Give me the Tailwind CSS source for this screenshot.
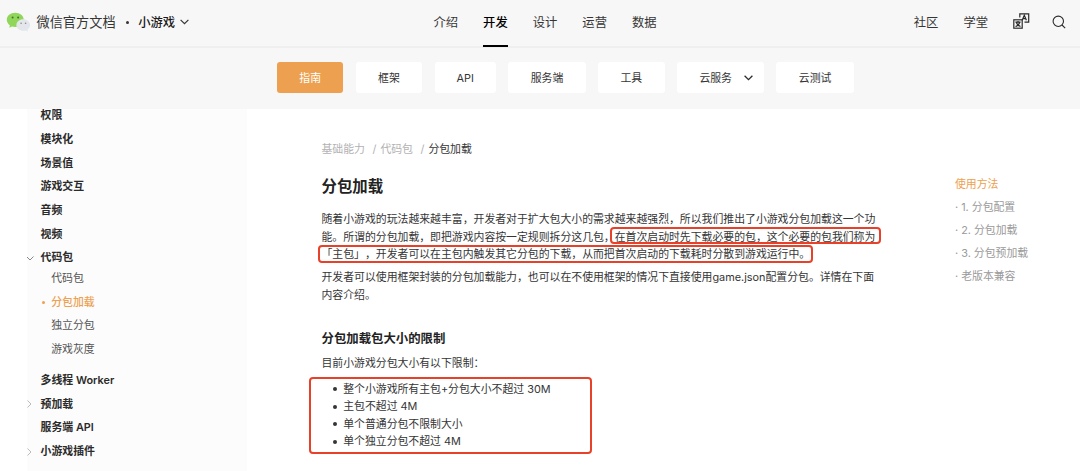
<!DOCTYPE html>
<html lang="zh-CN">
  <head>
    <meta charset="utf-8" />
    <meta content="width=device-width, initial-scale=1.0" name="viewport" />
    <title>分包加载 | 微信官方文档 · 小游戏</title>
    <script src="https://cdn.jsdelivr.net/npm/@tailwindcss/browser@4"></script>
  </head>
  <body class="h-[471px] overflow-hidden bg-white font-['Inter','Noto_Sans_CJK_SC',sans-serif] text-[10.86px] text-[#353535] whitespace-nowrap [text-spacing-trim:space-all]">
    <header class="flex h-[48px] items-center border-b-2 border-[#efefef] bg-[#f7f7f7] pl-[6px] pr-[14px] text-[12.3px]">
      <div class="flex w-[427.5px] items-center">
        <!-- logo -->
        <svg class="-mt-[2px] h-[20px] w-[25px]" viewBox="0 0 25 20" fill="none">
          <path d="M9.2 .8C4.4 .8 .8 3.9 .8 7.8c0 2.2 1.1 4.2 3.1 5.5L3.2 15.8l2.8-1.4c1 .3 2.1.5 3.2.5 4.8 0 8.5-3.1 8.5-7.1S14 .8 9.2 .8z" fill="#8fd65a" />
          <path d="M17.2 7.2c-3.8 0-6.8 2.6-6.8 5.8s3 5.8 6.8 5.8c.9 0 1.8-.1 2.6-.4l2.3 1.1-.6-2c1.6-1.1 2.6-2.7 2.6-4.5 0-3.2-3.1-5.8-6.9-5.8z" fill="#e3e6ea" />
          <circle cx="6.6" cy="5.4" r="1" fill="#43702a" />
          <circle cx="12.1" cy="5.4" r="1" fill="#43702a" />
          <circle cx="15.1" cy="11.2" r=".8" fill="#868a8e" />
          <circle cx="19.6" cy="11.2" r=".8" fill="#868a8e" />
        </svg>
        <span class="ml-[5.5px] text-[13.2px]">微信官方文档</span>
        <span class="ml-[10px] size-[3px] rounded-full bg-[#353535]"></span>
        <span class="ml-[9.5px] font-medium text-[#1a1a1a]">小游戏</span>
        <svg class="-mt-[1px] ml-[5px] h-[6px] w-[9px]" viewBox="0 0 9 6" fill="none" stroke="#353535" stroke-width="1.2"><path d="M.6 .8l3.9 3.9L8.4 .8" /></svg>
      </div>
      <nav class="flex h-full gap-[25px] leading-[46px]">
        <a>介绍</a>
        <a class="h-[47px] border-b-2 border-black font-medium text-black">开发</a>
        <a>设计</a>
        <a>运营</a>
        <a>数据</a>
      </nav>
      <div class="ml-auto flex items-center gap-[25px]">
        <a>社区</a>
        <a>学堂</a>
        <svg class="-mt-[4px] h-[16px] w-[17px]" viewBox="0 0 17 16" fill="none" stroke="#2b2b2b" stroke-width="1.2">
          <path d="M6.8 4.5V.8h8.9v8.400h-4.200" />
          <rect x=".8" y="6.8" width="8.4" height="8.4" />
          <path d="M9.2 7.2l2.100-5 2.100 5M10 5.700h2.600M2.400 9.200h5.200M5 8v1.200M6.700 9.200c-.4 2-1.900 3.600-4.200 4.300M3.300 9.200c.4 2 1.900 3.600 4.200 4.300" />
        </svg>
        <svg class="-mt-[2px] -ml-[3px] h-[14px] w-[14px]" viewBox="0 0 14 14" fill="none" stroke="#2b2b2b" stroke-width="1.1"><circle cx="6.3" cy="6.3" r="5.2" /><path d="M10 10l3.2 3.2" /></svg>
      </div>
    </header>

    <div class="flex h-[61px] gap-[12.4px] bg-[#f7f7f7] pl-[277px] pt-[14px] leading-[32px]">
      <a class="h-[31px] rounded-[3px] bg-[#eda150] px-[22.3px] text-white">指南</a>
      <a class="h-[31px] rounded-[3px] bg-white px-[22.4px]">框架</a>
      <a class="h-[31px] w-[61.3px] rounded-[3px] bg-white text-center">API</a>
      <a class="h-[31px] rounded-[3px] bg-white px-[22.4px]">服务端</a>
      <a class="h-[31px] rounded-[3px] bg-white px-[22.4px]">工具</a>
      <a class="flex h-[31px] w-[87px] items-center rounded-[3px] bg-white pl-[22.4px]">
        云服务
        <svg class="ml-[12px] h-[6px] w-[9px]" viewBox="0 0 9 6" fill="none" stroke="#2b2b2b" stroke-width="1.3"><path d="M.6 .8l3.9 3.9L8.4 .8" /></svg>
      </a>
      <a class="h-[31px] rounded-[3px] bg-white px-[22.4px]">云测试</a>
    </div>

    <div class="flex h-[362px]">
      <aside class="ml-[27px] w-[220px] overflow-hidden bg-[#fcfcfc] leading-[23.7px]">
        <ul class="-mt-[4.9px] pl-[13.6px] font-semibold text-[#2b2b2b]">
          <li>权限</li>
          <li>模块化</li>
          <li>场景值</li>
          <li>游戏交互</li>
          <li>音频</li>
          <li>视频</li>
          <li class="-ml-[14.6px] flex items-center">
            <svg class="mr-[6.6px] h-[5px] w-[8px]" viewBox="0 0 8 5" fill="none" stroke="#888" stroke-width="1"><path d="M.5 .5L4 4 7.500 .5" /></svg>代码包
          </li>
          <li class="-mt-[3.2px] mb-[7.2px] font-normal text-[#555]">
            <ul class="pl-[10.6px]">
              <li>代码包</li>
              <li class="-ml-[9.6px] flex items-center text-[#eda150]"><span class="mr-[6.6px] size-[3px] rounded-full bg-[#eda150]"></span><span class="font-medium">分包加载</span></li>
              <li>独立分包</li>
              <li>游戏灰度</li>
            </ul>
          </li>
          <li>多线程 Worker</li>
          <li class="-ml-[13.6px] flex items-center">
            <svg class="mr-[8.6px] h-[8px] w-[5px]" viewBox="0 0 5 8" fill="none" stroke="#bbb" stroke-width="1"><path d="M.5 .5L4 4 .5 7.500" /></svg>预加载
          </li>
          <li>服务端 API</li>
          <li class="-ml-[13.6px] flex items-center">
            <svg class="mr-[8.6px] h-[8px] w-[5px]" viewBox="0 0 5 8" fill="none" stroke="#bbb" stroke-width="1"><path d="M.5 .5L4 4 .5 7.500" /></svg>小游戏插件
          </li>
        </ul>
      </aside>

      <main class="ml-[74.5px] w-[633.5px] pt-[31.5px] leading-[17.5px]">
        <div class="flex text-[#b2b2b2]">
          <span>基础能力</span><span class="ml-[7.5px] mr-[4px]">/</span><span>代码包</span><span class="ml-[7.5px] mr-[4px]">/</span><span class="text-[#353535]">分包加载</span>
        </div>
        <h1 class="mt-[17px] text-[15.4px] leading-[24px] font-semibold text-[#222]">分包加载</h1>
        <p class="mt-[12px]">
          随着小游戏的玩法越来越丰富，开发者对于扩大包大小的需求越来越强烈，所以我们推出了小游戏分包加载这一个功<br />能。所谓的分包加载，即把游戏内容按一定规则拆分这几包，在首次启动时先下载必要的包，这个必要的包我们称为<br />「主包」，开发者可以在主包内触发其它分包的下载，从而把首次启动的下载耗时分散到游戏运行中。
        </p>
        <p class="mt-[5.5px]">开发者可以使用框架封装的分包加载能力，也可以在不使用框架的情况下直接使用game.json配置分包。详情在下面<br />内容介绍。</p>
        <h2 class="mt-[24.5px] text-[12.4px] leading-[20px] font-semibold text-[#222]">分包加载包大小的限制</h2>
        <p class="mt-[6px]">目前小游戏分包大小有以下限制：</p>
        <ul class="mt-[8.5px] pl-[11.7px]">
          <li class="flex items-center gap-[6px] before:size-[4px] before:rounded-full before:bg-[#353535]">整个小游戏所有主包+分包大小不超过 30M</li>
          <li class="flex items-center gap-[6px] before:size-[4px] before:rounded-full before:bg-[#353535]">主包不超过 4M</li>
          <li class="flex items-center gap-[6px] before:size-[4px] before:rounded-full before:bg-[#353535]">单个普通分包不限制大小</li>
          <li class="flex items-center gap-[6px] before:size-[4px] before:rounded-full before:bg-[#353535]">单个独立分包不超过 4M</li>
        </ul>
      </main>

      <aside class="pt-[64px] leading-[23px] text-[#9a9a9a]">
        <ul>
          <li class="text-[#eda150]">使用方法</li>
          <li>· 1. 分包配置</li>
          <li>· 2. 分包加载</li>
          <li>· 3. 分包预加载</li>
          <li>· 老版本兼容</li>
        </ul>
      </aside>
    </div>

    <!-- red marks over the text -->
    <div class="absolute left-[610px] top-[227px] h-[17px] w-[271px] rounded-[4px] border-2 border-[#e8412a]"></div>
    <div class="absolute left-[318px] top-[245px] h-[18px] w-[495px] rounded-[4px] border-2 border-[#e8412a]"></div>
    <div class="absolute left-[309px] top-[376.5px] h-[77px] w-[283px] rounded-[4px] border-2 border-[#e8412a]"></div>
  </body>
</html>
